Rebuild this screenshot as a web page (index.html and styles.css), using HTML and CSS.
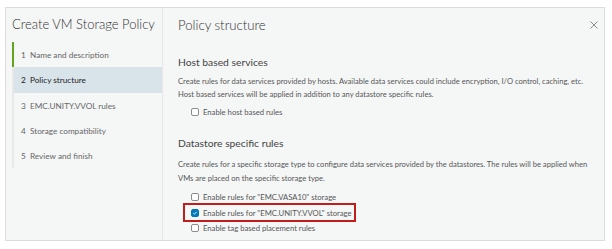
FILE: index.html
```html
<!DOCTYPE html>
<html>
<head>
<meta charset="utf-8">
<link rel="stylesheet" href="styles.css">
</head>
<body>
<div class="modal">
  <aside class="sidebar">
    <h1 class="side-title">Create VM Storage Policy</h1>
    <ol class="steps">
      <li class="step done"><span class="num">1</span>Name and description</li>
      <li class="step active"><span class="num">2</span>Policy structure</li>
      <li class="step"><span class="num">3</span>EMC.UNITY.VVOL rules</li>
      <li class="step"><span class="num">4</span>Storage compatibility</li>
      <li class="step"><span class="num">5</span>Review and finish</li>
    </ol>
  </aside>
  <main class="content">
    <header class="content-head">
      <h2 class="content-title">Policy structure</h2>
      <svg class="close" width="8" height="8" viewBox="0 0 8 8"><path d="M0.5 0.5L7.5 7.5M7.5 0.5L0.5 7.5" stroke="#8c8c8c" stroke-width="1" fill="none"/></svg>
    </header>
    <section class="group">
      <h3 class="group-title">Host based services</h3>
      <p class="desc">Create rules for data services provided by hosts. Available data services could include encryption, I/O control, caching, etc.<br>Host based services will be applied in addition to any datastore specific rules.</p>
      <label class="check"><span class="box"></span>Enable host based rules</label>
    </section>
    <section class="group group-ds">
      <h3 class="group-title">Datastore specific rules</h3>
      <p class="desc">Create rules for a specific storage type to configure data services provided by the datastores. The rules will be applied when<br>VMs are placed on the specific storage type.</p>
      <label class="check"><span class="box"></span>Enable rules for "EMC.VASA10" storage</label>
      <label class="check highlight"><span class="box checked"><svg width="8" height="8" viewBox="0 0 8 8"><path d="M1.8 4.2L3.3 5.6L6.2 2.4" stroke="#fff" stroke-width="1.2" fill="none"/></svg></span>Enable rules for "EMC.UNITY.VVOL" storage</label>
      <label class="check"><span class="box"></span>Enable tag based placement rules</label>
    </section>
  </main>
</div>
</body>
</html>
```
FILE: styles.css
```css
* { box-sizing: border-box; }
html, body { margin: 0; padding: 0; background: #fff; }
body {
  font-family: "Lato", "Open Sans", sans-serif;
  color: #565656;
  padding: 7px 0 0 5px;
}
.modal {
  width: 600px;
  height: 234px;
  border: 1px solid #dcdcdc;
  background: #f5f6f6;
  display: flex;
  overflow: hidden;
}
.sidebar {
  width: 157px;
  flex: none;
  border-right: 1px solid #e6e6e6;
  padding: 0 0 0 6px;
}
.side-title {
  margin: 0;
  padding: 6px 0 0 0;
  height: 34px;
  font-weight: 300;
  font-size: 13px;
  line-height: 20px;
  color: #333;
  white-space: nowrap;
}
.steps {
  list-style: none;
  margin: 0;
  padding: 0;
  border-left: 2px solid #e8e8e8;
}
.step {
  height: 25px;
  display: flex;
  align-items: center;
  font-size: 8.2px;
  color: #666;
  padding-left: 7px;
  margin-left: -2px;
  border-left: 2px solid transparent;
  white-space: nowrap;
}
.step.done { border-left-color: #62a420; }
.step.active {
  background: #d9e4ea;
  color: #222;
  margin-left: 0;
  border-left: none;
  padding-left: 7px;
  height: 26px;
}
.step .num { width: 9px; flex: none; }
.content {
  flex: 1;
  padding: 0 0 0 15px;
}
.content-head {
  display: flex;
  justify-content: space-between;
  align-items: center;
  height: 34px;
  padding: 0 6px 0 0;
}
.content-title {
  margin: 0;
  font-weight: 300;
  font-size: 13.2px;
  color: #333;
}
.group { padding-top: 12px; }
.group-ds { padding-top: 16px; }
.group-title {
  margin: 0;
  font-weight: 400;
  font-size: 10.3px;
  line-height: 16px;
  color: #444;
  height: 16px;
}
.desc {
  margin: 5px 0 4px;
  font-size: 7.6px;
  line-height: 13px;
  color: #565656;
  white-space: nowrap;
}
.group-ds .desc {
  margin: 6px 0 5px;
  line-height: 14px;
}
.check {
  display: flex;
  align-items: center;
  height: 14px;
  font-size: 7.7px;
  color: #565656;
  padding-left: 13px;
  white-space: nowrap;
  width: max-content;
}
.box {
  width: 8px;
  height: 8px;
  border: 1px solid #8c8c8c;
  border-radius: 2px;
  background: #fff;
  margin-right: 4px;
  display: flex;
  align-items: center;
  justify-content: center;
}
.box.checked {
  background: #0079b8;
  border-color: #0079b8;
}
.check.highlight {
  outline: 2px solid #c21d1d;
  outline-offset: -1px;
  margin-left: 6px;
  padding-left: 7px;
  padding-right: 3px;
  height: 17px;
}
```
